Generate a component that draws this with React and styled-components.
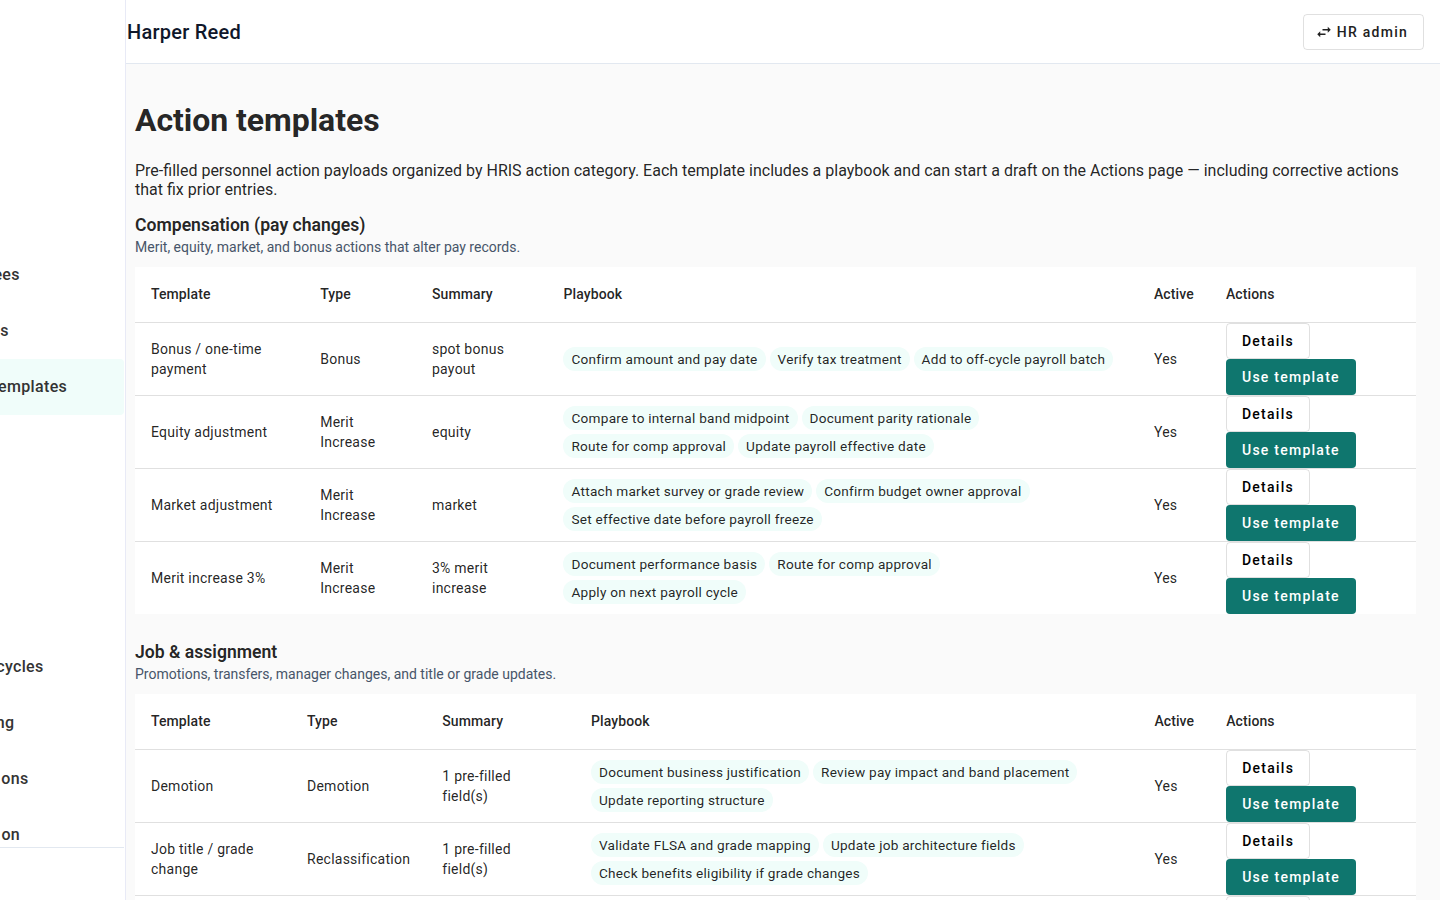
import React from 'react';
import styled, { createGlobalStyle } from 'styled-components';

const GlobalStyle = createGlobalStyle`
  * {
    box-sizing: border-box;
  }

  body {
    margin: 0;
    overflow: hidden;
    font-family: Roboto, sans-serif;
    background: #fafafa;
    color: rgba(0, 0, 0, 0.87);
    -webkit-font-smoothing: antialiased;
  }
`;

const Page = styled.div`
  display: flex;
  height: 900px;
  overflow: hidden;
`;

const Sidebar = styled.aside`
  display: flex;
  flex-direction: column;
  flex: none;
  width: 126px;
  padding-right: 1px;
  background: #fff;
  border-right: 1px solid #e8eaf6;
`;

const NavList = styled.nav`
  flex: none;
  height: 847px;
  padding-top: 247px;
  overflow: hidden;
`;

const NavItem = styled.a`
  display: flex;
  align-items: center;
  justify-content: flex-end;
  height: 56px;
  padding-right: ${(props) => 124 - props.$end}px;
  border-radius: 0 4px 4px 0;
  background: ${(props) => (props.$active ? '#f0fdfa' : 'transparent')};
  color: #333;
  font-size: 16px;
  font-weight: 500;
  line-height: 24px;
  letter-spacing: 0.35px;
  white-space: nowrap;
`;

const NavSpace = styled.div`
  height: 224px;
`;

const SidebarFooter = styled.div`
  flex: 1;
  border-top: 1px solid #e2e8f0;
`;

const Main = styled.div`
  flex: 1;
  min-width: 0;
`;

const Toolbar = styled.header`
  display: flex;
  align-items: center;
  justify-content: space-between;
  height: 64px;
  padding: 0 16px 0 1px;
  background: #fff;
  border-bottom: 1px solid #e2e8f0;
`;

const UserName = styled.span`
  color: #0f172a;
  font-size: 20px;
  font-weight: 500;
  line-height: 32px;
  letter-spacing: 0.25px;
`;

const Button = styled.button`
  display: flex;
  align-items: center;
  height: 36px;
  padding: 0 ${(props) => (props.$filled ? 16 : 15)}px;
  border: ${(props) => (props.$filled ? 'none' : '1px solid rgba(0, 0, 0, 0.12)')};
  border-radius: 4px;
  background: ${(props) => (props.$filled ? '#0f766e' : 'transparent')};
  color: ${(props) => (props.$filled ? '#fff' : '#000')};
  font-family: inherit;
  font-size: 14px;
  font-weight: 500;
  letter-spacing: 1.25px;
  white-space: nowrap;
`;

const RoleButton = styled(Button)`
  padding: 0 15px 0 11px;
  color: #212121;

  svg {
    width: 18px;
    height: 18px;
    margin-right: 4px;
  }
`;

const Content = styled.main`
  padding: 37px 24px 0 9px;
`;

const Title = styled.h1`
  margin: 0 0 22px;
  font-size: 32px;
  font-weight: 700;
  line-height: 38px;
  letter-spacing: -0.05px;
`;

const Intro = styled.p`
  margin: 0 0 15px;
  font-size: 16px;
  line-height: 19px;
`;

const Section = styled.section`
  margin-bottom: 27px;
`;

const SectionTitle = styled.h2`
  margin: 0 0 3px;
  font-size: 17.6px;
  font-weight: 600;
  line-height: 22px;
`;

const SectionText = styled.p`
  margin: 0 0 12px;
  color: #475569;
  font-size: 14px;
  line-height: 16px;
`;

const Table = styled.table`
  width: 1281px;
  table-layout: fixed;
  border-spacing: 0;
  background: #fff;
`;

const Th = styled.th`
  width: ${(props) => props.$width}px;
  height: 56px;
  padding: 0 16px 1px;
  border-bottom: 1px solid rgba(0, 0, 0, 0.12);
  text-align: left;
  font-size: 14px;
  font-weight: 500;
  line-height: 22px;
  letter-spacing: 0.1px;
`;

const Td = styled.td`
  padding: 0 16px;
  border-bottom: 1px solid rgba(0, 0, 0, 0.12);
  font-size: 14px;
  line-height: 20px;
  letter-spacing: 0.25px;

  tr:last-child > & {
    border-bottom: none;
  }
`;

const Steps = styled.div`
  display: flex;
  flex-wrap: wrap;
  gap: 4px;
`;

const Step = styled.span`
  padding: 2px 8px;
  border-radius: 12px;
  background: #f0fdfa;
  font-size: 13.6px;
  white-space: nowrap;
`;

const SwapIcon = () => (
  <svg viewBox="0 0 24 24" fill="currentColor">
    <path d="M6.99 11 3 15l3.99 4v-3H14v-2H6.99v-3zM21 9l-3.99-4v3H10v2h7.01v3L21 9z" />
  </svg>
);

const navTop = [
  { label: 'ees', end: 19.8 },
  { label: 's', end: 8.8 },
  { label: 'emplates', end: 67.2, active: true },
];

const navBottom = [
  { label: 'cycles', end: 43.6 },
  { label: 'ng', end: 14.3 },
  { label: 'ons', end: 28.5 },
  { label: 'on', end: 20.1 },
];

const columns = ['Template', 'Type', 'Summary', 'Playbook', 'Active', 'Actions'];

const sections = [
  {
    title: 'Compensation (pay changes)',
    text: 'Merit, equity, market, and bonus actions that alter pay records.',
    widths: [169.2, 111.8, 131.5, 590.5, 72, 206],
    rows: [
      {
        name: 'Bonus / one-time payment',
        type: 'Bonus',
        summary: 'spot bonus payout',
        steps: ['Confirm amount and pay date', 'Verify tax treatment', 'Add to off-cycle payroll batch'],
      },
      {
        name: 'Equity adjustment',
        type: 'Merit Increase',
        summary: 'equity',
        steps: [
          'Compare to internal band midpoint',
          'Document parity rationale',
          'Route for comp approval',
          'Update payroll effective date',
        ],
      },
      {
        name: 'Market adjustment',
        type: 'Merit Increase',
        summary: 'market',
        steps: [
          'Attach market survey or grade review',
          'Confirm budget owner approval',
          'Set effective date before payroll freeze',
        ],
      },
      {
        name: 'Merit increase 3%',
        type: 'Merit Increase',
        summary: '3% merit increase',
        steps: ['Document performance basis', 'Route for comp approval', 'Apply on next payroll cycle'],
      },
    ],
  },
  {
    title: 'Job & assignment',
    text: 'Promotions, transfers, manager changes, and title or grade updates.',
    widths: [156, 135.3, 148.7, 563.4, 71.8, 205.8],
    rows: [
      {
        name: 'Demotion',
        type: 'Demotion',
        summary: '1 pre-filled field(s)',
        steps: ['Document business justification', 'Review pay impact and band placement', 'Update reporting structure'],
      },
      {
        name: 'Job title / grade change',
        type: 'Reclassification',
        summary: '1 pre-filled field(s)',
        steps: [
          'Validate FLSA and grade mapping',
          'Update job architecture fields',
          'Check benefits eligibility if grade changes',
        ],
      },
      { name: '', type: '', summary: '', steps: [] },
    ],
  },
];

const TemplateTable = ({ widths, rows }) => (
  <Table>
    <thead>
      <tr>
        {columns.map((column, i) => (
          <Th key={column} $width={widths[i]}>
            {column}
          </Th>
        ))}
      </tr>
    </thead>
    <tbody>
      {rows.map((row) => (
        <tr key={row.name}>
          <Td>{row.name}</Td>
          <Td>{row.type}</Td>
          <Td>{row.summary}</Td>
          <Td>
            <Steps>
              {row.steps.map((step) => (
                <Step key={step}>{step}</Step>
              ))}
            </Steps>
          </Td>
          <Td>{row.name && 'Yes'}</Td>
          <Td>
            <Button>Details</Button>
            <Button $filled>Use template</Button>
          </Td>
        </tr>
      ))}
    </tbody>
  </Table>
);

const App = () => {
  return (
    <Page>
      <GlobalStyle />
      <Sidebar>
        <NavList>
          {navTop.map((item) => (
            <NavItem key={item.label} $end={item.end} $active={item.active}>
              {item.label}
            </NavItem>
          ))}
          <NavSpace />
          {navBottom.map((item) => (
            <NavItem key={item.label} $end={item.end}>
              {item.label}
            </NavItem>
          ))}
        </NavList>
        <SidebarFooter />
      </Sidebar>
      <Main>
        <Toolbar>
          <UserName>Harper Reed</UserName>
          <RoleButton>
            <SwapIcon />
            HR admin
          </RoleButton>
        </Toolbar>
        <Content>
          <Title>Action templates</Title>
          <Intro>
            Pre-filled personnel action payloads organized by HRIS action category. Each template includes a playbook
            and can start a draft on the Actions page — including corrective actions that fix prior entries.
          </Intro>
          {sections.map((section) => (
            <Section key={section.title}>
              <SectionTitle>{section.title}</SectionTitle>
              <SectionText>{section.text}</SectionText>
              <TemplateTable widths={section.widths} rows={section.rows} />
            </Section>
          ))}
        </Content>
      </Main>
    </Page>
  );
};

export default App;
